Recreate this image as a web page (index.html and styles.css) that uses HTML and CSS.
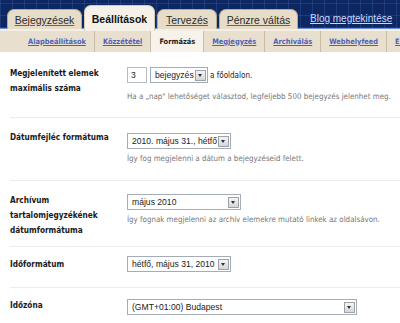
FILE: index.html
```html
<!DOCTYPE html>
<html lang="hu">
<head>
<meta charset="utf-8">
<title>Beállítások – Formázás</title>
<link rel="stylesheet" href="styles.css">
</head>
<body>
<div class="page">
  <div class="header">
    <nav class="tabs">
      <a class="tab" href="#">Bejegyzések</a>
      <a class="tab active" href="#">Beállítások</a>
      <a class="tab" href="#">Tervezés</a>
      <a class="tab" href="#">Pénzre váltás</a>
      <a class="view" href="#">Blog megtekintése</a>
    </nav>
  </div>
  <div class="strip"></div>
  <nav class="subnav">
    <a href="#" class="sub">Alapbeállítások</a>
    <a href="#" class="sub">Közzététel</a>
    <span class="sub current">Formázás</span>
    <a href="#" class="sub">Megjegyzés</a>
    <a href="#" class="sub">Archiválás</a>
    <a href="#" class="sub">Webhelyfeed</a>
    <a href="#" class="sub last">E-mail</a>
  </nav>

  <div class="content">
    <div class="row r1">
      <div class="label">Megjelenített elemek maximális száma</div>
      <div class="field">
        <div class="inline">
          <span class="input">3</span>
          <span class="sel w58"><span class="sel-text">bejegyzés</span><span class="sel-btn"></span></span>
          <span class="after">a főoldalon.</span>
        </div>
        <div class="hint hint-wide">Ha a „nap" lehetőséget választod, legfeljebb 500 bejegyzés jelenhet meg.</div>
      </div>
    </div>

    <div class="row r2">
      <div class="label">Dátumfejléc formátuma</div>
      <div class="field">
        <span class="sel w104"><span class="sel-text">2010. május 31., hétfő</span><span class="sel-btn"></span></span>
        <div class="hint">Így fog megjelenni a dátum a bejegyzéseid felett.</div>
      </div>
    </div>

    <div class="row r3">
      <div class="label">Archívum<br>tartalomjegyzékének<br>dátumformátuma</div>
      <div class="field">
        <span class="sel w114"><span class="sel-text">május 2010</span><span class="sel-btn"></span></span>
        <div class="hint">Így fognak megjelenni az archív elemekre mutató linkek az oldalsávon.</div>
      </div>
    </div>

    <div class="row r4">
      <div class="label">Időformátum</div>
      <div class="field">
        <span class="sel w104"><span class="sel-text">hétfő, május 31, 2010</span><span class="sel-btn"></span></span>
      </div>
    </div>

    <div class="row r5">
      <div class="label">Időzóna</div>
      <div class="field">
        <span class="sel w230"><span class="sel-text">(GMT+01:00) Budapest</span><span class="sel-btn"></span></span>
      </div>
    </div>
  </div>
</div>
</body>
</html>
```

FILE: styles.css
```css
* { box-sizing: border-box; }

html, body {
  margin: 0;
  padding: 0;
  background: #ffffff;
  overflow: hidden;
}

.page {
  width: 400px;
  font-family: "DejaVu Sans Condensed", "DejaVu Sans", sans-serif;
  font-stretch: condensed;
}

/* ---------- header with tabs ---------- */
.header {
  height: 29px;
  background-color: #0c2762;
  background-image:
    repeating-linear-gradient(90deg, rgba(90,130,210,0.22) 0 1px, transparent 1px 12px),
    repeating-linear-gradient(0deg, rgba(90,130,210,0.22) 0 1px, transparent 1px 12px);
  border-bottom: 1px solid #6a8fd8;
  padding-left: 7px;
}

.tabs {
  display: flex;
  align-items: flex-end;
  height: 100%;
  gap: 2px;
}

.tab {
  display: flex;
  align-items: center;
  justify-content: center;
  height: 20px;
  margin-bottom: -1px;
  background: #e6dcc7;
  border: 1px solid #b8aa8d;
  border-bottom: none;
  border-radius: 7px 7px 0 0;
  font-family: "Liberation Sans", Arial, sans-serif;
  font-stretch: normal;
  font-size: 10.5px;
  color: #2b2b2b;
  text-decoration: underline;
  text-decoration-color: #666;
}
.tab:nth-child(1) { width: 75px; }
.tab:nth-child(2) { width: 71px; }
.tab:nth-child(3) { width: 60px; }
.tab:nth-child(4) { width: 79px; }

.tab.active {
  height: 26px;
  margin-bottom: -3px;
  background: #f6f1e8;
  border-color: #d8ccb4;
  font-weight: bold;
  color: #111;
  text-decoration: none;
  position: relative;
  z-index: 1;
}

.view {
  margin-left: 10px;
  align-self: center;
  margin-top: 8px;
  font-family: "Liberation Sans", Arial, sans-serif;
  font-stretch: normal;
  font-size: 10px;
  color: #c9d8ff;
  text-decoration: underline;
  white-space: nowrap;
}

.strip {
  height: 2px;
  background: #f4eee4;
}

/* ---------- sub navigation ---------- */
.subnav {
  display: flex;
  height: 21px;
  background: #e8dfce;
  padding-left: 20px;
  white-space: nowrap;
  overflow: hidden;
}

.sub {
  display: flex;
  align-items: center;
  padding: 0 8px 0 8px;
  border-right: 1px solid #c8bca4;
  font-family: "DejaVu Sans Condensed", "DejaVu Sans", sans-serif;
  font-stretch: condensed;
  font-size: 7.4px;
  font-weight: bold;
  color: #4d63b8;
  text-decoration: underline;
}
.sub.last { border-right: none; padding-right: 0; }

.sub.current {
  background: #f7f3eb;
  color: #222;
  text-decoration: none;
  padding: 0 8px;
}

/* ---------- content rows ---------- */
.content {
  padding: 0 0 0 10px;
}

.row {
  display: grid;
  grid-template-columns: 117px 1fr;
  border-bottom: 1px solid #ececec;
}
.r1 { padding: 14px 0 16px; height: 66px; }
.r2 { padding: 14px 0 0; height: 63px; }
.r3 { padding: 12px 0 0; height: 66px; }
.r4 { padding: 8px 0 0; height: 41px; }
.r5 { padding: 10px 0 0; border-bottom: none; }

.label {
  font-size: 8.2px;
  font-weight: bold;
  line-height: 15px;
  color: #1a1a1a;
}
.r2 .label { margin-top: -2px; }
.r4 .label { margin-top: 2px; }

.field {
  display: flex;
  flex-direction: column;
  align-items: flex-start;
  padding-top: 1px;
}

.inline {
  display: flex;
  align-items: center;
  gap: 3px;
}

.input {
  display: flex;
  align-items: center;
  width: 20px;
  height: 16px;
  border: 1px solid #b7bcc4;
  padding-left: 3px;
  font-family: "Liberation Sans", Arial, sans-serif;
  font-stretch: normal;
  font-size: 8.5px;
  color: #222;
}

.after {
  font-size: 8px;
  color: #222;
  margin-left: -1px;
}

.sel {
  display: flex;
  align-items: center;
  justify-content: space-between;
  height: 16px;
  border: 1px solid #a4acb8;
  background: #fff;
  padding: 0 1px 0 4px;
  font-family: "Liberation Sans", Arial, sans-serif;
  font-stretch: normal;
  font-size: 8.6px;
  color: #222;
}
.w58 { width: 58px; }
.w104 { width: 104px; }
.w114 { width: 114px; }
.w230 { width: 230px; }

.sel-btn {
  position: relative;
  width: 11px;
  height: 11px;
  border: 1px solid #9ca2aa;
  background: linear-gradient(#f4f4f4, #d6d6d6);
  flex: none;
}
.sel-btn::after {
  content: "";
  position: absolute;
  left: 2px;
  top: 3px;
  border-left: 2.5px solid transparent;
  border-right: 2.5px solid transparent;
  border-top: 3px solid #333;
}

.hint {
  margin-top: 5px;
  font-size: 7.9px;
  color: #777;
  white-space: nowrap;
}
.hint-wide { margin-top: 9px; }
```
